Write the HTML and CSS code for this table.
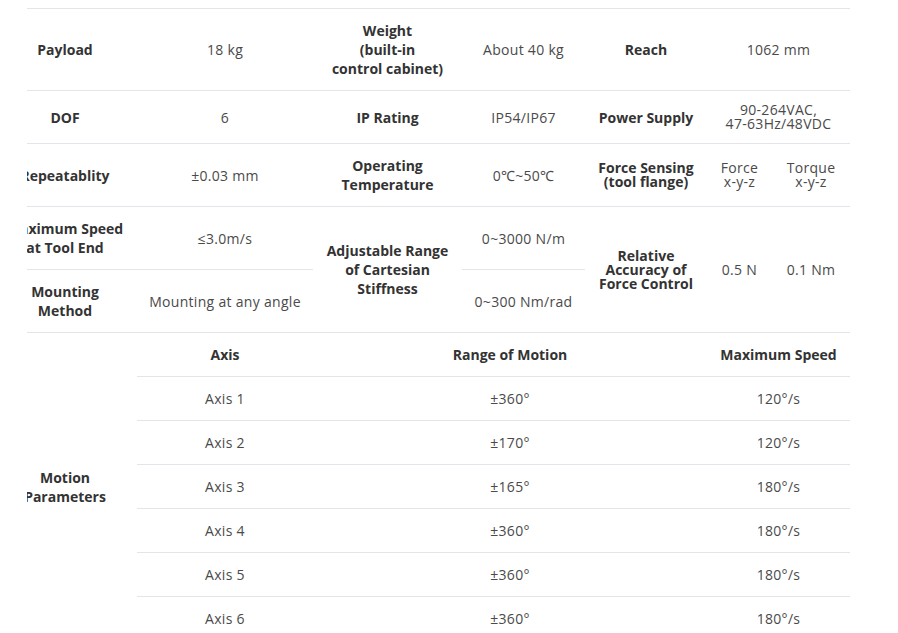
FILE: index.html
```html
<!DOCTYPE html>
<html lang="en">
<head>
<meta charset="utf-8">
<title>Specifications</title>
<link rel="stylesheet" href="styles.css">
</head>
<body>
<div class="clip">
  <table class="spec">
    <colgroup>
      <col class="c1"><col class="c2"><col class="c3"><col class="c4"><col class="c5"><col class="c6a"><col class="c6b">
    </colgroup>
    <tbody>
      <tr class="first">
        <th>Payload</th>
        <td>18 kg</td>
        <th>Weight<br>(built-in<br>control cabinet)</th>
        <td>About 40 kg</td>
        <th>Reach</th>
        <td colspan="2">1062 mm</td>
      </tr>
      <tr>
        <th>DOF</th>
        <td>6</td>
        <th>IP Rating</th>
        <td>IP54/IP67</td>
        <th>Power Supply</th>
        <td colspan="2" class="tight">90-264VAC,<br>47-63Hz/48VDC</td>
      </tr>
      <tr>
        <th>Repeatablity</th>
        <td>±0.03 mm</td>
        <th>Operating<br>Temperature</th>
        <td>0℃~50℃</td>
        <th class="tight">Force Sensing<br>(tool flange)</th>
        <td class="tight">Force<br>x-y-z</td>
        <td class="tight">Torque<br>x-y-z</td>
      </tr>
      <tr>
        <th>Maximum Speed<br>at Tool End</th>
        <td>≤3.0m/s</td>
        <th rowspan="2">Adjustable Range<br>of Cartesian<br>Stiffness</th>
        <td>0~3000 N/m</td>
        <th rowspan="2" class="tight">Relative<br>Accuracy of<br>Force Control</th>
        <td rowspan="2">0.5 N</td>
        <td rowspan="2">0.1 Nm</td>
      </tr>
      <tr>
        <th>Mounting<br>Method</th>
        <td>Mounting at any angle</td>
        <td>0~300 Nm/rad</td>
      </tr>
      <tr>
        <th rowspan="7">Motion<br>Parameters</th>
        <th>Axis</th>
        <th colspan="3">Range of Motion</th>
        <th colspan="2">Maximum Speed</th>
      </tr>
      <tr><td>Axis 1</td><td colspan="3">±360°</td><td colspan="2">120°/s</td></tr>
      <tr><td>Axis 2</td><td colspan="3">±170°</td><td colspan="2">120°/s</td></tr>
      <tr><td>Axis 3</td><td colspan="3">±165°</td><td colspan="2">180°/s</td></tr>
      <tr><td>Axis 4</td><td colspan="3">±360°</td><td colspan="2">180°/s</td></tr>
      <tr><td>Axis 5</td><td colspan="3">±360°</td><td colspan="2">180°/s</td></tr>
      <tr><td>Axis 6</td><td colspan="3">±360°</td><td colspan="2">180°/s</td></tr>
    </tbody>
  </table>
</div>
</body>
</html>
```
FILE: styles.css
```css
html, body {
  overflow: hidden;
}
body {
  margin: 8px;
  background: #fff;
  font-family: "Open Sans", "Noto Sans", sans-serif;
  font-size: 14px;
  color: #444;
}
.clip {
  margin-left: 19px;
  width: 823px;
  overflow: hidden;
}
.spec {
  margin-left: -34px;
  width: 857px;
  table-layout: fixed;
  border-collapse: collapse;
}
.c1 { width: 144px; }
.c2 { width: 176px; }
.c3 { width: 149px; }
.c4 { width: 123px; }
.c5 { width: 122px; }
.c6a { width: 65px; }
.c6b { width: 78px; }
.spec th,
.spec td {
  padding: 12px 0;
  line-height: 19px;
  text-align: center;
  vertical-align: middle;
  border-bottom: 1px solid #e4e4ea;
  white-space: nowrap;
}
.spec tr.first > * {
  border-top: 1px solid #e4e4ea;
}
.spec th {
  font-weight: 700;
  color: #333;
}
.spec td {
  font-weight: 400;
  color: #4a4a4a;
  letter-spacing: 0.3px;
}
.spec .tight {
  line-height: 14px;
}
```
